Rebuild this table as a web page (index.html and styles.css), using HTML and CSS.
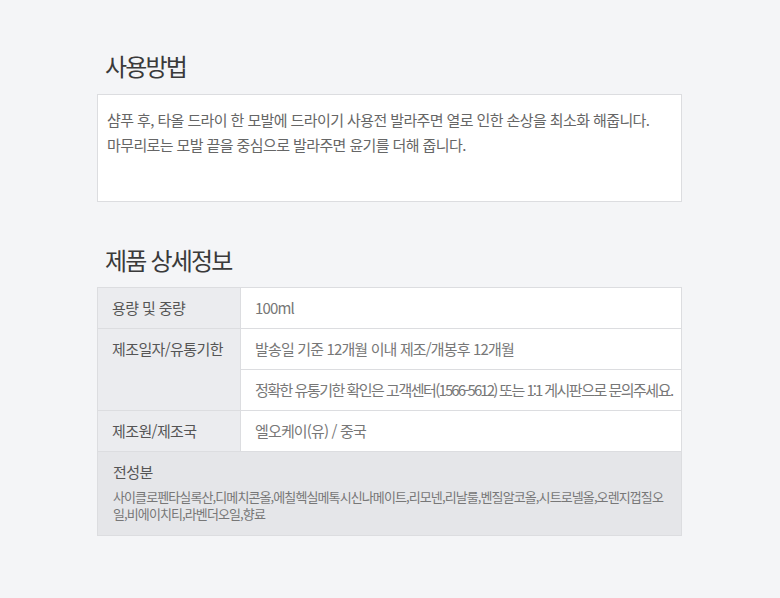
FILE: index.html
```html
<!DOCTYPE html>
<html lang="ko">
<head>
<meta charset="utf-8">
<title>사용방법</title>
<link rel="stylesheet" href="styles.css">
</head>
<body>
<main class="page">
  <section class="section">
    <h2 class="title">사용방법</h2>
    <div class="usage">
      <p>샴푸 후, 타올 드라이 한 모발에 드라이기 사용전 발라주면 열로 인한 손상을 최소화 해줍니다.</p>
      <p>마무리로는 모발 끝을 중심으로 발라주면 윤기를 더해 줍니다.</p>
    </div>
  </section>
  <section class="section second">
    <h2 class="title">제품 상세정보</h2>
    <table class="info">
      <colgroup>
        <col class="col-label">
        <col>
      </colgroup>
      <tr>
        <th>용량 및 중량</th>
        <td>100ml</td>
      </tr>
      <tr>
        <th rowspan="2">제조일자/유통기한</th>
        <td>발송일 기준 12개월 이내 제조/개봉후 12개월</td>
      </tr>
      <tr>
        <td class="nowrap">정확한 유통기한 확인은 고객센터<span class="num">(1566-5612)</span> 또는 <span class="num">1:1</span> 게시판으로 문의주세요.</td>
      </tr>
      <tr>
        <th>제조원/제조국</th>
        <td>엘오케이(유) / 중국</td>
      </tr>
      <tr>
        <td colspan="2" class="ingredients">
          <div class="ing-title">전성분</div>
          <div class="ing-list">사이클로펜타실록산,디메치콘올,에칠헥실메톡시신나메이트,리모넨,리날룰,벤질알코올,시트로넬올,오렌지껍질오일,비에이치티,라벤더오일,향료</div>
        </td>
      </tr>
    </table>
  </section>
</main>
</body>
</html>
```
FILE: styles.css
```css
html, body {
  margin: 0;
  padding: 0;
  background: #f4f5f7;
}
body {
  font-family: "Noto Sans CJK KR", "Noto Sans", sans-serif;
  color: #555;
}
.page {
  width: 585px;
  margin: 0 auto 0 97px;
  padding-top: 49px;
}
.title {
  margin: 0 0 11px 0;
  padding-left: 8px;
  font-size: 24px;
  line-height: 34px;
  font-weight: 400;
  letter-spacing: -1.8px;
  color: #3a3a3a;
}
.second {
  margin-top: 41px;
}
.second .title {
  margin-bottom: 10px;
}
.usage {
  box-sizing: border-box;
  height: 108px;
  background: #fff;
  border: 1px solid #dcdde0;
  padding: 12px 9px;
}
.usage p {
  margin: 0;
  font-size: 15px;
  line-height: 25px;
  letter-spacing: -0.6px;
  color: #666;
}
.info {
  width: 100%;
  table-layout: fixed;
  border-collapse: collapse;
  border: 1px solid #dcdde0;
  font-size: 15px;
  letter-spacing: -0.85px;
}
.col-label {
  width: 143px;
}
.info th, .info td {
  border: 1px solid #dcdde0;
  padding: 10px 8px 10px 14px;
  line-height: 20px;
  text-align: left;
  vertical-align: top;
  font-weight: 400;
}
.info th {
  background: #ebecef;
  color: #555;
  letter-spacing: -0.6px;
}
.info td {
  background: #fff;
  color: #777;
}
.info td.nowrap {
  white-space: nowrap;
  letter-spacing: -1.5px;
}
.info td.nowrap .num {
  letter-spacing: -1.9px;
}
.info td.ingredients {
  background: #e5e6e9;
  padding: 10px 8px 13px 15px;
  letter-spacing: -0.6px;
}
.ing-title {
  font-size: 15px;
  line-height: 20px;
  color: #555;
  margin-bottom: 6px;
}
.ing-list {
  font-size: 13px;
  line-height: 17px;
  color: #777;
  word-break: break-all;
  letter-spacing: -0.9px;
}
```
